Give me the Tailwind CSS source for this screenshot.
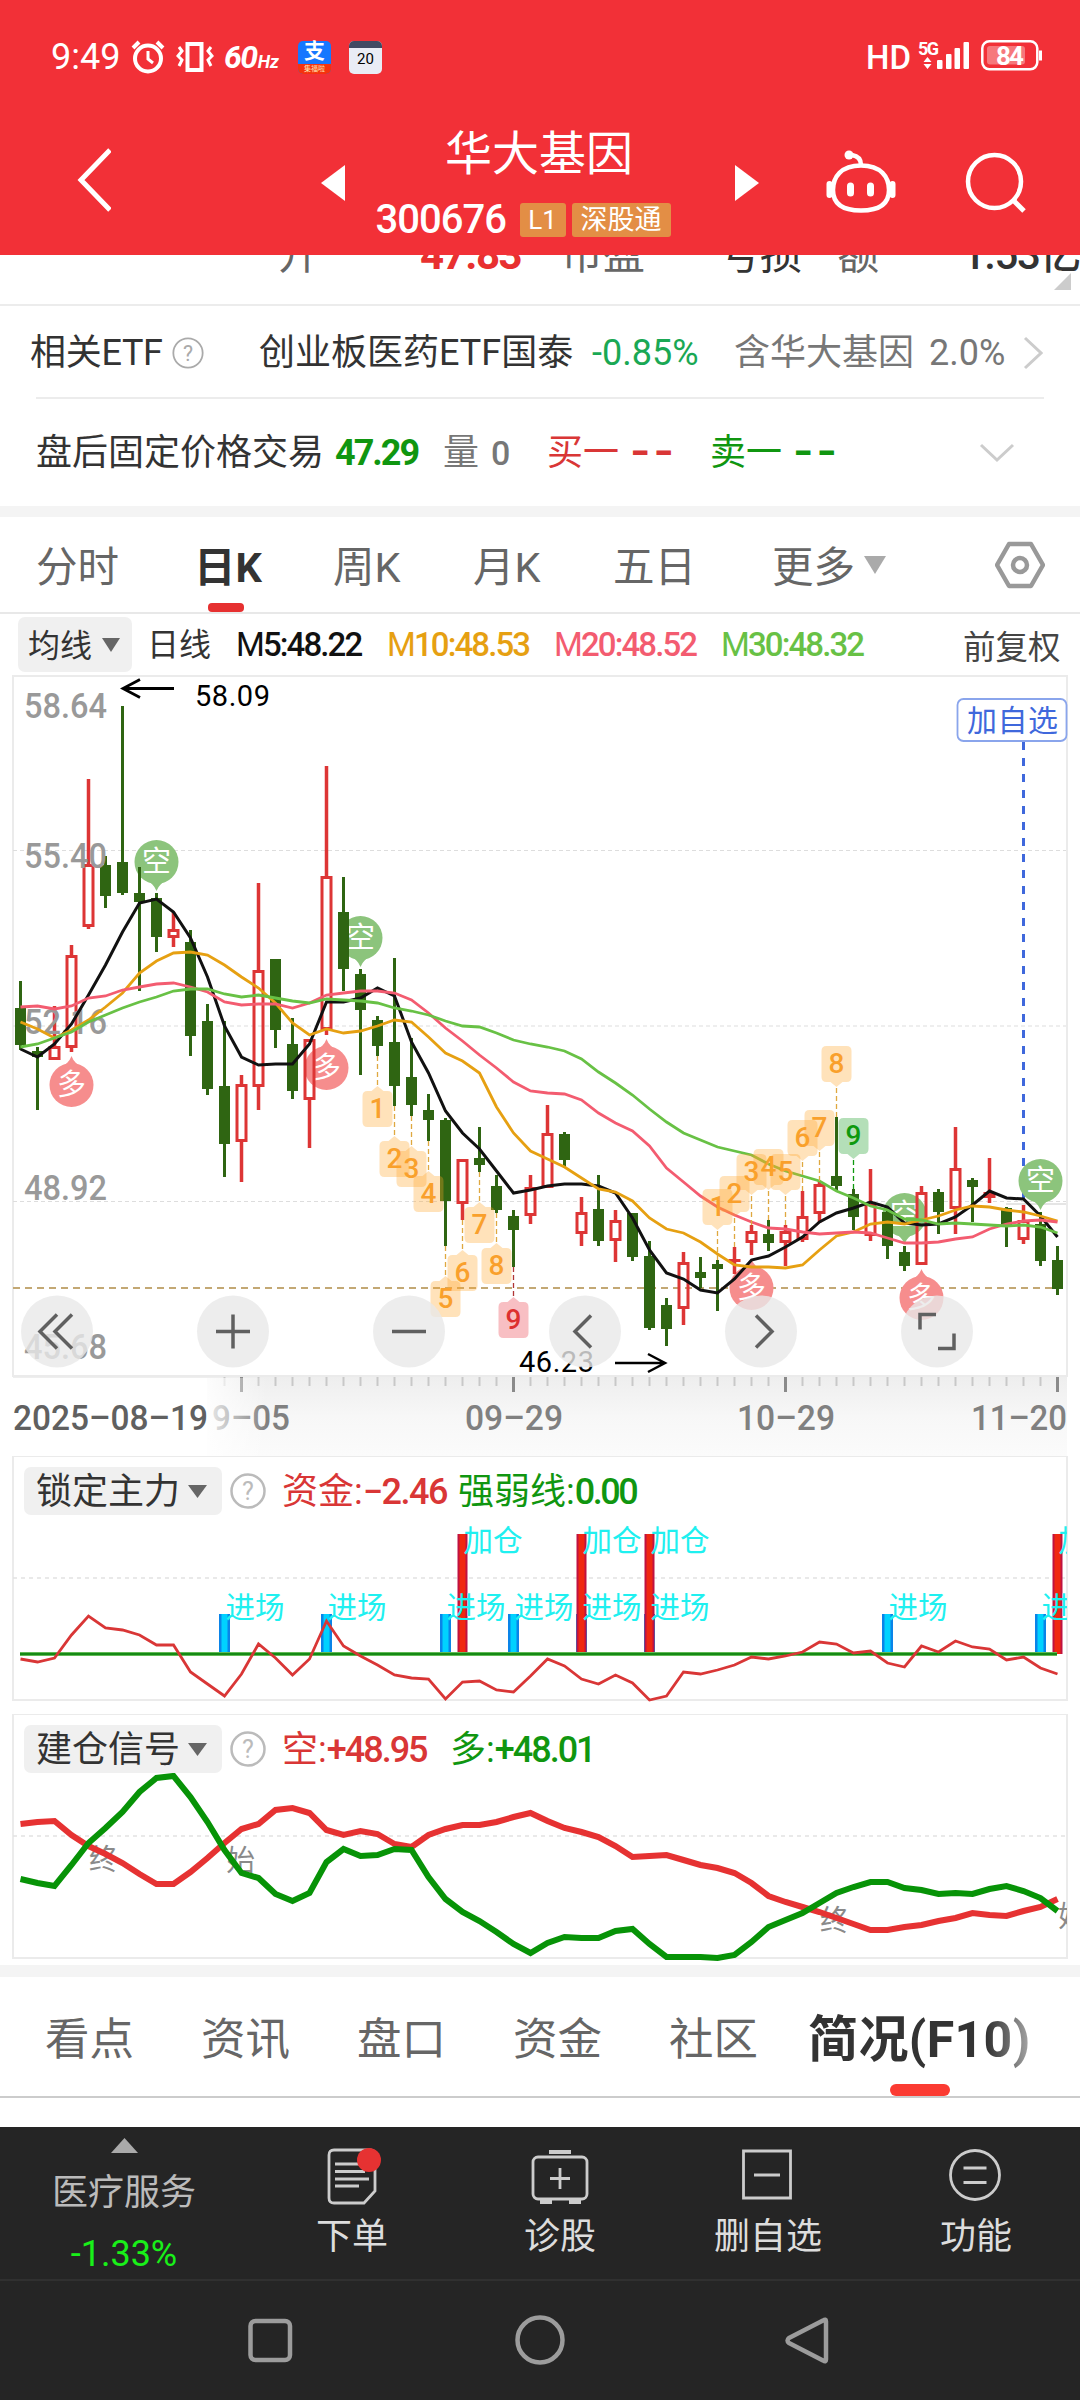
<!DOCTYPE html>
<html lang="zh-CN">
<head>
    <meta charset="UTF-8">
    <meta name="viewport" content="width=device-width, initial-scale=1.0">
    <title>华大基因 300676</title>
    <script src="https://cdn.jsdelivr.net/npm/@tailwindcss/browser@4"></script>
</head>
<body class="bg-white">
<div class="w-[1080px] h-[2400px] overflow-hidden flex flex-col font-[Roboto,'Noto_Sans_CJK_SC',sans-serif] text-[36px] leading-none text-[#333] whitespace-nowrap">

    <!-- Header -->
    <header class="h-[255px] shrink-0 bg-[#f23037] text-white flex flex-col">
        <div class="h-[114px] shrink-0 flex items-center pl-[51px] pr-[38px]">
            <span class="w-[80px]">9:49</span>
            <svg class="w-[34px] h-[34px]" viewBox="0 0 34 34" fill="none" stroke="#fff" stroke-width="4">
                <circle cx="17" cy="18.500" r="13"/><path d="M17 11v8l5 4" stroke-width="3"/><path d="M2 8l6-6M32 8l-6-6"/>
            </svg>
            <svg class="w-[38px] h-[34px] ml-[11px]" viewBox="0 0 38 34" fill="none" stroke="#fff" stroke-width="4">
                <path d="M11.500 4h14v26h-14z"/><path d="M3 7l3 4-4 5 4 4-3 6M35 7l-3 4 4 5-4 4 3 6" stroke-width="3"/>
            </svg>
            <span class="ml-[10px] w-[74px] flex items-baseline font-bold italic"><span class="text-[32px] tracking-[-1.500px]">60</span><span class="text-[18px] ml-[1px]">Hz</span></span>
            <span class="w-[33px] h-[33px] rounded-[5px] bg-[#1677ff] flex flex-col items-center">
                <span class="text-[21px] h-[23px] font-bold">支</span>
                <span class="w-full h-[10px] rounded-b-[5px] bg-[#f5320f] text-center text-[7px] leading-[10px] text-[#ffe2b0]">集福啦</span>
            </span>
            <span class="ml-[18px] w-[33px] h-[33px] rounded-[5px] overflow-hidden bg-[#e9ecf5] flex flex-col items-center">
                <span class="w-full h-[7px] bg-[#414a63]"></span>
                <span class="mt-[4px] text-[15px] text-black">20</span>
            </span>
            <span class="ml-auto w-[52px] text-[33px] font-medium">HD</span>
            <svg class="w-[52px] h-[30px] -mt-[2px] overflow-visible" viewBox="0 0 52 30" fill="#fff">
                <text x="0" y="14" font-size="18" font-weight="700" textLength="21">5G</text>
                <path d="M9.500 16l4 5h-8zM9.500 28l4-5h-8z"/>
                <rect x="19" y="19" width="5.500" height="9" rx="1"/><rect x="28" y="13" width="5.500" height="15" rx="1"/>
                <rect x="36.500" y="7" width="5.500" height="21" rx="1"/><rect x="45.500" y="1" width="5.500" height="27" rx="1"/>
            </svg>
            <svg class="w-[61px] h-[31px] ml-[11px] -mt-[4px]" viewBox="0 0 61 31">
                <rect x="1.300" y="1.300" width="55" height="28" rx="7" fill="none" stroke="#fff" stroke-width="2.500"/>
                <rect x="6" y="6" width="38" height="18.500" rx="3" fill="#fff" fill-opacity=".35"/>
                <path d="M58 10.500h3v10h-3z" fill="#fff"/>
                <text x="15" y="25" font-size="26" font-weight="700" fill="#fff" textLength="28">84</text>
            </svg>
        </div>
        <div class="flex-1 flex">
            <svg class="w-[34px] h-[64px] ml-[77px] mt-[34px]" viewBox="0 0 34 64" fill="none" stroke="#fff" stroke-width="5"><path d="M33 2L4 32l29 30"/></svg>
            <svg class="w-[24px] h-[36px] ml-[210px] mt-[51px]" viewBox="0 0 24 36" fill="#fff"><path d="M24 0v36L0 18z"/></svg>
            <div class="w-[390px] flex flex-col items-center">
                <h1 class="mt-[16px] text-[47px] h-[47px] -ml-[2px]">华大基因</h1>
                <div class="w-[296px] mt-[25px] h-[36px] flex items-center -ml-[33px]">
                    <span class="w-[144px] text-[40px] font-medium tracking-[-1px]">300676</span>
                    <span class="w-[46px] h-[34px] bg-[#e38e45] rounded-[3px] text-[26px] flex items-center justify-center">L1</span>
                    <span class="ml-[6px] w-[99px] shrink-0 h-[34px] bg-[#e38e45] rounded-[3px] text-[27px] flex items-center justify-center">深股通</span>
                </div>
            </div>
            <svg class="w-[24px] h-[36px] mt-[51px]" viewBox="0 0 24 36" fill="#fff"><path d="M0 0v36l24-18z"/></svg>
            <svg class="w-[70px] h-[64px] ml-[67px] mt-[36px]" viewBox="0 0 70 64" fill="none" stroke="#fff" stroke-width="4.500">
                <path d="M35 15.500C15 15.500 7 27 7 40S15 60.500 35 60.500S63 53 63 40S55 15.500 35 15.500z"/>
                <path d="M35 15c0-6-3-9-9-10"/><circle cx="23" cy="5" r="4.500" fill="#fff" stroke="none"/>
                <path d="M3.500 34v11M66.500 34v11" stroke-width="6" stroke-linecap="round"/>
                <path d="M24.500 36v7M44.500 36v7" stroke-width="7" stroke-linecap="round"/>
            </svg>
            <svg class="w-[62px] h-[62px] ml-[69px] mt-[38px]" viewBox="0 0 62 62" fill="none" stroke="#fff" stroke-width="4.500"><circle cx="29.500" cy="29.500" r="26.500"/><path d="M48 48l11 11" stroke-width="5"/></svg>
        </div>
    </header>

    <!-- Quote row, scrolled under the header -->
    <div class="h-[51px] shrink-0 overflow-hidden border-b-2 border-[#ececec] flex text-[42px] text-[#666] pl-[278px] relative">
        <div class="flex -mt-[22px] h-[44px] items-center">
            <span class="w-[142px]">开</span>
            <span class="w-[141px] font-bold text-[#e83030] tracking-[-1.500px]">47.83</span>
            <span class="w-[157px]">市盈</span>
            <span class="w-[119px] text-[#333]">亏损</span>
            <span class="w-[125px]">额</span>
            <span class="text-[#333] font-medium tracking-[-1.500px]">1.53亿</span>
        </div>
        <svg class="absolute left-[1054px] top-[18px] w-[17px] h-[17px]" viewBox="0 0 17 17"><path d="M17 0v17H0z" fill="#ccc"/></svg>
    </div>

    <div class="h-[91px] pt-[2px] shrink-0 ml-[30px] mr-[36px] flex items-center">
        <span class="w-[142px] tracking-[-0.300px]">相关ETF</span>
        <svg class="w-[32px] h-[32px]" viewBox="0 0 36 36"><circle cx="18" cy="18" r="16.500" fill="none" stroke="#aaa" stroke-width="2"/><text x="18" y="26.500" text-anchor="middle" font-size="24" fill="#aaa">?</text></svg>
        <span class="ml-[55px] w-[333px]">创业板医药ETF国泰</span>
        <span class="w-[142px] text-[#1aa854]">-0.85%</span>
        <span class="w-[195px] text-[#777]">含华大基因</span>
        <span class="w-[94px] text-[#777]">2.0%</span>
        <svg class="w-[20px] h-[34px] shrink-0" viewBox="0 0 20 34" fill="none" stroke="#ccc" stroke-width="3"><path d="M2 2l16 15L2 32"/></svg>
    </div>
    <div class="h-[109px] shrink-0 mx-[36px] border-t-2 border-[#ececec] flex items-center">
        <span class="w-[299px]">盘后固定价格交易</span>
        <span class="w-[108px] font-bold text-[#109610] tracking-[-2px]">47.29</span>
        <span class="w-[48px] text-[#777]">量</span>
        <span class="w-[56px] text-[34px] text-[#777] font-medium">0</span>
        <span class="w-[83px] text-[#d93636]">买一</span>
        <span class="w-[80px] text-[#d93636] font-[Inter] text-[44px] font-semibold tracking-[3px] -mt-[5px]">--</span>
        <span class="w-[83px] text-[#109610]">卖一</span>
        <span class="w-[186px] text-[#109610] font-[Inter] text-[44px] font-semibold tracking-[3px] -mt-[5px]">--</span>
        <svg class="w-[36px] h-[20px] shrink-0" viewBox="0 0 36 20" fill="none" stroke="#ccc" stroke-width="3"><path d="M2 2l16 15L34 2"/></svg>
    </div>
    <div class="h-[11px] shrink-0 bg-[#f4f4f4]"></div>

    <!-- Period tabs -->
    <nav class="h-[97px] shrink-0 border-b-2 border-[#e8e8e8] pl-[36px] flex items-center text-[41.500px] text-[#666]">
        <span class="w-[158px] pt-[6px]">分时</span>
        <span class="w-[139px] h-full flex items-center font-bold text-[#333] relative pt-[6px]">日K<i class="absolute left-[14px] bottom-0 w-[36px] h-[9px] rounded-[4px] bg-[#e63030]"></i></span>
        <span class="w-[140px] pt-[6px]">周K</span>
        <span class="w-[140px] pt-[6px]">月K</span>
        <span class="w-[159px] pt-[6px]">五日</span>
        <span class="w-[92px] pt-[6px]">更多</span>
        <svg class="w-[22px] h-[18px]" viewBox="0 0 22 18"><path d="M0 0h22L11 18z" fill="#aaa"/></svg>
        <svg class="w-[50px] h-[48px] ml-[109px]" viewBox="0 0 50 48" fill="none" stroke="#999" stroke-width="4.500" stroke-linejoin="round"><path d="M14 3h22l12 21-12 21H14L2 24z"/><circle cx="25" cy="24" r="7"/></svg>
    </nav>

    <!-- MA legend -->
    <div class="h-[61px] shrink-0 pl-[18px] flex items-center text-[33px]">
        <span class="w-[114px] h-[55px] rounded-[7px] bg-[#f0f0f0] flex items-center pl-[10px] pt-[2px] text-[32px]">均线<svg class="w-[18px] h-[14px] ml-[10px] -mt-[2px]" viewBox="0 0 18 14"><path d="M0 0h18L9 14z" fill="#666"/></svg></span>
        <span class="ml-[15px] w-[89px] text-[32px]">日线</span>
        <span class="w-[151px] font-medium text-[#111] tracking-[-1.900px]"><span class="font-normal">M</span>5:48.22</span>
        <span class="w-[167px] font-medium text-[#e6a012] tracking-[-1.900px]"><span class="font-normal">M</span>10:48.53</span>
        <span class="w-[167px] font-medium text-[#f35c70] tracking-[-1.900px]"><span class="font-normal">M</span>20:48.52</span>
        <span class="w-[242px] font-medium text-[#68c145] tracking-[-1.900px]"><span class="font-normal">M</span>30:48.32</span>
        <span class="text-[32.500px] text-[#444] mt-[8px]">前复权</span>
    </div>

    <!-- Candlestick chart with its date axis -->
    <svg id="kline" class="block w-[1080px] h-[781px] shrink-0" viewBox="0 675 1080 781"></svg>

    <!-- Indicator panels -->
    <section class="h-[258px] shrink-0 relative">
        <svg id="fund" class="absolute inset-0 w-[1080px] h-[258px]" viewBox="0 1456 1080 258"></svg>
        <div class="relative pt-[11px] pl-[24px] flex items-center">
            <span class="w-[198px] h-[48px] rounded-[7px] bg-[#f0f0f0] flex items-center pl-[12px] pt-[2px]">锁定主力<svg class="w-[19px] h-[13px] ml-[8px] -mt-[2px]" viewBox="0 0 18 14" preserveAspectRatio="none"><path d="M0 0h18L9 14z" fill="#666"/></svg></span>
            <svg class="w-[36px] h-[36px] ml-[8px]" viewBox="0 0 36 36"><circle cx="18" cy="18" r="16.500" fill="none" stroke="#bbb" stroke-width="2.500"/><text x="18" y="26.500" text-anchor="middle" font-size="25" fill="#bbb">?</text></svg>
            <span class="ml-[16px] w-[176px] text-[#d93636] flex items-center pt-[2px]">资金:<span class="font-medium tracking-[-1.500px]">−2.46</span></span>
            <span class="text-[#109610] flex items-center pt-[2px]">强弱线:<span class="font-medium tracking-[-2.500px]">0.00</span></span>
        </div>
    </section>
    <section class="h-[251px] shrink-0 relative">
        <svg id="signal" class="absolute inset-0 w-[1080px] h-[251px]" viewBox="0 1714 1080 251"></svg>
        <div class="relative pt-[11px] pl-[24px] flex items-center">
            <span class="w-[198px] h-[48px] rounded-[7px] bg-[#f0f0f0] flex items-center pl-[12px] pt-[2px]">建仓信号<svg class="w-[19px] h-[13px] ml-[8px] -mt-[2px]" viewBox="0 0 18 14" preserveAspectRatio="none"><path d="M0 0h18L9 14z" fill="#666"/></svg></span>
            <svg class="w-[36px] h-[36px] ml-[8px]" viewBox="0 0 36 36"><circle cx="18" cy="18" r="16.500" fill="none" stroke="#bbb" stroke-width="2.500"/><text x="18" y="26.500" text-anchor="middle" font-size="25" fill="#bbb">?</text></svg>
            <span class="ml-[16px] w-[168px] text-[#d93636] flex items-center pt-[2px]">空:<span class="font-medium tracking-[-2px]">+48.95</span></span>
            <span class="text-[#109610] flex items-center pt-[2px]">多:<span class="font-medium tracking-[-2px]">+48.01</span></span>
        </div>
    </section>
    <div class="h-[12px] shrink-0 bg-[#f4f4f4]"></div>

    <!-- Content tabs -->
    <nav class="h-[121px] shrink-0 border-b-2 border-[#ccc] pl-[45px] flex items-center text-[44.500px] text-[#666]">
        <span class="w-[156px] pt-[7px]">看点</span>
        <span class="w-[156px] pt-[7px]">资讯</span>
        <span class="w-[156px] pt-[7px]">盘口</span>
        <span class="w-[156px] pt-[7px]">资金</span>
        <span class="w-[139px] pt-[7px]">社区</span>
        <span class="h-full flex items-center relative text-[50px] font-bold"><span class="bg-linear-to-r from-[#333] from-80% to-[#aaa] bg-clip-text text-transparent pt-[12px] pb-[6px] tracking-[0.400px]">简况(F10)</span><i class="absolute left-[82px] bottom-0 w-[60px] h-[12px] rounded-[6px] bg-[#fb3b32]"></i></span>
    </nav>
    <div class="h-[29px] shrink-0"></div>

    <!-- Bottom toolbar -->
    <footer class="h-[154px] shrink-0 bg-[#252525] text-[#ddd] border-b-2 border-[#303030] flex">
        <div class="w-[248px] flex flex-col items-center text-[#bbb]">
            <svg class="mt-[11px] w-[27px] h-[15px]" viewBox="0 0 27 15"><path d="M13.500 0L27 15H0z" fill="#aaa"/></svg>
            <span class="mt-[22px]">医疗服务</span>
            <span class="mt-[25px] text-[#19f019]">-1.33%</span>
        </div>
        <div class="w-[208px] flex flex-col items-center">
            <svg class="mt-[20px] ml-[5px] w-[58px] h-[58px]" viewBox="0 0 58 58" fill="none" stroke="#ccc" stroke-width="2.800">
                <path d="M8 3h36q5 0 5 5v36L38 56H8q-5 0-5-5V8q0-5 5-5z"/><path d="M9 17h30M9 24.500h30M9 32h34M9 39h24" stroke-width="3"/>
                <circle cx="43" cy="13" r="12" fill="#e63232" stroke="none"/>
            </svg>
            <span class="mt-[14px]">下单</span>
        </div>
        <div class="w-[208px] flex flex-col items-center">
            <svg class="mt-[20px] w-[58px] h-[58px]" viewBox="0 0 58 58" fill="none" stroke="#ccc" stroke-width="2.800">
                <rect x="2" y="10" width="54" height="42" rx="5"/><path d="M18 5h22M9 55h12M38 55h12" stroke-width="4"/><path d="M29 21v21M19 31.500h20"/>
            </svg>
            <span class="mt-[14px]">诊股</span>
        </div>
        <div class="w-[208px] flex flex-col items-center">
            <svg class="mt-[20px] -ml-[2px] w-[58px] h-[58px]" viewBox="0 0 58 58" fill="none" stroke="#ccc" stroke-width="2.800"><path d="M5.500 4h47v47h-47zM16 28h26"/></svg>
            <span class="mt-[14px]">删自选</span>
        </div>
        <div class="w-[208px] flex flex-col items-center">
            <svg class="mt-[20px] -ml-[2px] w-[58px] h-[58px]" viewBox="0 0 58 58" fill="none" stroke="#ccc" stroke-width="2.800"><circle cx="29" cy="28" r="24.500"/><path d="M17.500 21h23M17.500 35.500h23"/></svg>
            <span class="mt-[14px]">功能</span>
        </div>
    </footer>
    <div class="flex-1 bg-[#252525] flex items-center justify-center gap-[218px]">
        <svg class="w-[50px] h-[50px]" viewBox="0 0 50 50" fill="none" stroke="#9c9c9c" stroke-width="4.500"><rect x="5.500" y="5" width="39.500" height="39" rx="5"/></svg>
        <svg class="w-[54px] h-[54px]" viewBox="0 0 54 54" fill="none" stroke="#9c9c9c" stroke-width="4.500"><circle cx="27" cy="26" r="22.500"/></svg>
        <svg class="w-[50px] h-[50px]" viewBox="0 0 50 50" fill="none" stroke="#9c9c9c" stroke-width="4.500" stroke-linejoin="round"><path d="M41 5.500v38q0 3-3 1L4 27q-3-2.500 0-5L38 4.500q3-2 3 1z"/></svg>
    </div>
</div>

<script>
    // One trading day per column
    const X = i => 20.5 + 17 * i;

    // [colour, high, body top, body bottom, low]
    const candles = [
        ['g',981,1008,1045,1050],['g',1047,1051,1057,1110],['r',1006,1046,1060,1060],['r',945,955,1048,1052],
        ['r',779,864,927,929],['g',856,865,896,908],['g',706,862,893,895],['g',867,893,902,991],
        ['g',893,898,937,952],['r',912,929,938,947],['g',930,942,1036,1056],['g',1004,1021,1089,1095],
        ['g',1021,1086,1144,1177],['r',1075,1084,1142,1182],['r',883,970,1087,1110],['g',959,959,1030,1048],
        ['g',1018,1044,1091,1099],['r',1039,1039,1100,1148],['r',766,876,1030,1035],['g',877,912,969,991],
        ['g',969,974,1010,1075],['g',1016,1020,1046,1056],['g',958,1042,1086,1106],['g',1038,1077,1105,1116],
        ['g',1094,1110,1120,1141],['g',1118,1120,1201,1246],['r',1159,1159,1204,1220],['g',1127,1158,1165,1172],
        ['g',1175,1186,1210,1213],['g',1210,1216,1230,1267],['r',1175,1187,1216,1224],['r',1105,1133,1188,1188],
        ['g',1132,1134,1160,1168],['r',1197,1212,1234,1246],['g',1175,1209,1241,1246],['r',1210,1220,1241,1262],
        ['g',1213,1213,1257,1261],['g',1241,1256,1328,1330],['g',1298,1305,1329,1346],['r',1252,1262,1309,1325],
        ['g',1257,1272,1278,1288],['g',1260,1264,1269,1311],['r',1247,1259,1262,1274],['r',1225,1231,1243,1255],
        ['g',1220,1234,1243,1251],['r',1225,1231,1243,1266],['r',1191,1216,1240,1242],['r',1181,1184,1214,1223],
        ['g',1117,1176,1186,1190],['g',1189,1194,1217,1230],['r',1169,1203,1236,1241],['g',1207,1212,1246,1259],
        ['g',1246,1252,1266,1271],['r',1186,1192,1265,1265],['g',1189,1192,1212,1234],['r',1127,1168,1209,1234],
        ['g',1178,1180,1187,1222],['r',1158,1192,1198,1203],['g',1207,1208,1226,1247],['r',1205,1220,1240,1244],
        ['g',1212,1224,1261,1266],['g',1246,1260,1289,1295]
    ];

    const ma5 = [1049,1057,1044,1024,995,965,932,903,899,912,938,977,1026,1057,1065,1064,1064,1044,1002,1002,998,988,996,1042,1073,1111,1133,1149,1171,1193,1190,1186,1184,1184,1186,1193,1218,1250,1273,1279,1290,1293,1279,1260,1256,1247,1237,1222,1213,1208,1202,1207,1223,1225,1224,1217,1205,1191,1198,1199,1216,1237];
    const ma10 = [1022,1029,1038,1030,1020,1007,993,973,961,953,952,955,965,977,988,1003,1023,1035,1029,1033,1031,1026,1020,1022,1037,1053,1061,1073,1107,1133,1151,1159,1167,1178,1189,1192,1201,1218,1229,1233,1242,1254,1265,1267,1267,1268,1265,1250,1236,1232,1224,1222,1224,1220,1216,1210,1206,1207,1210,1212,1216,1221];
    const ma20 = [1007,1006,1009,1006,998,996,990,987,984,983,987,992,1002,1005,1004,1004,1008,1003,995,993,991,991,993,1000,1013,1028,1041,1055,1068,1082,1091,1093,1094,1100,1113,1123,1131,1146,1168,1182,1196,1207,1215,1222,1228,1229,1232,1234,1233,1232,1233,1238,1243,1243,1242,1239,1237,1229,1224,1221,1220,1222];
    const ma30 = [1047,1044,1038,1032,1022,1015,1008,1002,997,991,989,989,994,997,995,998,1001,1003,999,1000,1001,1003,1008,1011,1015,1021,1026,1027,1033,1040,1044,1047,1051,1059,1072,1083,1095,1109,1122,1133,1140,1147,1151,1155,1164,1171,1176,1181,1191,1198,1206,1210,1219,1220,1224,1223,1224,1225,1226,1225,1227,1233];

    const line = (data, color, width) =>
        `<polyline points="${data.map((y, i) => X(i) + ',' + y).join(' ')}" fill="none" stroke="${color}" stroke-width="${width}"/>`;
    const hline = (x1, x2, y, color, width, dash) =>
        `<path d="M${x1} ${y}H${x2}" stroke="${color}" stroke-width="${width}" stroke-dasharray="${dash || 'none'}"/>`;
    const frame = (y, h) => `<rect x="13" y="${y}" width="1054" height="${h}" fill="none" stroke="#ebebeb" stroke-width="2"/>`;

    function candle([c, high, top, bottom, low], i) {
        const x = X(i);
        if (c === 'g') {
            return `<path d="M${x} ${high}V${low}" stroke="#2f6512" stroke-width="3"/><rect x="${x - 5.5}" y="${top}" width="11" height="${bottom - top}" fill="#2f6512"/>`;
        }
        const h = bottom - top;
        const body = h < 7
            ? `<rect x="${x - 6}" y="${top}" width="12" height="${h}" fill="#dd3535"/>`
            : `<rect x="${x - 4.5}" y="${top + 1.5}" width="9" height="${h - 3}" fill="none" stroke="#dd3535" stroke-width="3"/>`;
        return `<path d="M${x} ${high}V${top}M${x} ${bottom}V${low}" stroke="#dd3535" stroke-width="3.5"/>` + body;
    }

    // Round long/short pins
    function pin(i, word) {
        const x = X(i), short = word === '空';
        const cy = short ? candles[i][1] - 31 : candles[i][4] + 33;
        const d = short ? 1 : -1;
        return `<g fill="${short ? '#8cc47c' : '#f68d8d'}"><circle cx="${x}" cy="${cy}" r="22"/><path d="M${x - 11} ${cy + 18 * d}Q${x - 3} ${cy + 21 * d} ${x} ${cy + 29 * d}Q${x + 3} ${cy + 21 * d} ${x + 11} ${cy + 18 * d}z"/></g>
            <text x="${x}" y="${cy + 10}" font-size="29" fill="#fff" text-anchor="middle">${word}</text>`;
    }

    // Numbered tags hanging above or below a candle
    function tag(i, n, above, bg = '#ffa629', bgOpacity = .32, ink = '#f9a02c', dash = '#dfa840') {
        const x = X(i), d = above ? -1 : 1;
        const from = above ? candles[i][1] : candles[i][4];
        const tip = from + 30 * d, near = tip + 5 * d, far = tip + 41 * d;
        const y = Math.min(near, far);
        return `<path d="M${x} ${from}V${tip}" stroke="${dash}" stroke-width="1.3" stroke-dasharray="5 3"/>
            <path d="M${x - 10} ${y}${above ? '' : `L${x - 6} ${y}L${x} ${tip}L${x + 6} ${y}`}H${x + 10}q5 0 5 5v26q0 5 -5 5${above ? `H${x + 6}L${x} ${tip}L${x - 6} ${near}` : ''}H${x - 10}q-5 0 -5 -5v-26q0 -5 5 -5z" fill="${bg}" fill-opacity="${bgOpacity}"/>
            <text x="${x}" y="${y + 27}" font-size="28" font-weight="500" fill="${ink}" text-anchor="middle">${n}</text>`;
    }

    function axisLabel(y, text) {
        return `<text x="24" y="${y}" font-size="35" font-family="Roboto" font-weight="500" fill="#999" textLength="83" lengthAdjust="spacingAndGlyphs">${text}</text>`;
    }

    function roundButton(x, path) {
        return `<circle cx="${x}" cy="1331.500" r="36" fill="#e8e8e8" fill-opacity=".8"/><path d="${path}" transform="translate(${x} 1331.500)" fill="none" stroke="#606060" stroke-width="3.500"/>`;
    }

    let k = `<defs>
        <linearGradient id="axisShade" x1="0" x2="0" y1="0" y2="1"><stop offset="0" stop-color="#eee"/><stop offset=".5" stop-color="#f7f7f7"/><stop offset="1" stop-color="#fbfbfb"/></linearGradient>
        <linearGradient id="axisFade" x1="0" x2="1" y1="0" y2="0"><stop offset="0" stop-color="#fff" stop-opacity=".85"/><stop offset=".35" stop-color="#fff" stop-opacity=".55"/><stop offset="1" stop-color="#fff" stop-opacity="0"/></linearGradient>
    </defs>`;
    k += '<rect x="13" y="1377" width="1054" height="79" fill="url(#axisShade)"/>';
    k += frame(676, 700);
    k += hline(13, 1066, 850.5, '#ddd', 1.2, '4 3') + hline(13, 1066, 1026, '#ddd', 1.2, '4 3') + hline(13, 1066, 1201.5, '#ddd', 1.2, '4 3');
    k += hline(13, 1060, 1288, '#c3a874', 1.9, '7 5') + hline(1006, 1066, 1204, '#ddd', 1.5);
    k += '<path d="M1023.500 742V1205" stroke="#3f68dc" stroke-width="3" stroke-dasharray="8 8"/>';
    k += pin(8, '空') + pin(20, '空') + pin(52, '空') + pin(60, '空');
    k += pin(3, '多') + pin(18, '多') + pin(43, '多') + pin(53, '多');
    k += candles.map(candle).join('');
    k += axisLabel(718, '58.64') + axisLabel(868, '55.40') + axisLabel(1034, '52.16') + axisLabel(1200, '48.92') + axisLabel(1359, '45.68');
    k += line(ma5, '#111', 3) + line(ma10, '#e6a012', 2.8) + line(ma20, '#f35c70', 2.8) + line(ma30, '#68c145', 2.8);

    for (let n = 1; n <= 8; n++) k += tag(20 + n, n, false);
    k += tag(29, 9, false, '#ee6068', .4, '#dd3030', '#b03535');
    for (let n = 1; n <= 8; n++) k += tag(40 + n, n, true);
    k += tag(49, 9, true, '#2fa53a', .36, '#0e990e', '#0e990e');

    k += `<path d="M174 688.500H124M140 679.500L123 688.500L140 697.500" fill="none" stroke="#000" stroke-width="2.800"/>
        <text x="195" y="706" font-size="29" fill="#000" textLength="75">58.09</text>
        <path d="M615 1363H665M648 1354L665 1363L648 1372" fill="none" stroke="#000" stroke-width="2.500"/>
        <text x="519" y="1372" font-size="29" fill="#000" textLength="75">46.23</text>
        <rect x="957.500" y="699" width="109" height="42" rx="6" fill="#fff" stroke="#8aa5ec" stroke-width="1.800"/>
        <text x="967" y="731" font-size="30" fill="#3f68dc" textLength="91">加自选</text>`;

    k += roundButton(57, 'M0 -17L-17 0L0 17M15 -17L-2 0L15 17');
    k += roundButton(233, 'M-17 0H17M0 -17V17');
    k += roundButton(409, 'M-17 0H17');
    k += roundButton(585, 'M6 -16L-10 0L6 16');
    k += roundButton(761, 'M-5 -16L11 0L-5 16');
    k += roundButton(937, 'M-17 -2V-17H-1M17 2V17H1');

    for (let i = 12; i < 62; i++) {
        const major = [13, 29, 45, 61].includes(i);
        k += `<path d="M${X(i)} 1377V${major ? 1392 : 1386}" stroke="${major ? '#8a8a8a' : '#c8c8c8'}" stroke-width="${major ? 3 : 2}"/>`;
    }
    const date = (x, w, text, color) => `<text x="${x}" y="1430" font-size="35" font-family="Roboto" font-weight="500" fill="${color}" textLength="${w}" lengthAdjust="spacingAndGlyphs">${text}</text>`;
    // The first date label runs under the left edge, so its month starts with the 9
    k += date(212, 78, '9–05', '#808080');
    k += date(465, 98, '09–29', '#808080') + date(737, 98, '10–29', '#808080') + date(971, 96, '11–20', '#808080');
    k += '<rect x="2" y="1378" width="205" height="78" fill="#fff"/><rect x="207" y="1378" width="60" height="78" fill="url(#axisFade)"/>';
    k += date(13, 195, '2025–08–19', '#606060');
    document.getElementById('kline').innerHTML = k;

    // Main-force fund indicator
    const fund = [1659,1662,1658,1635,1616,1628,1630,1635,1645,1645,1672,1684,1696,1674,1644,1658,1675,1659,1621,1646,1656,1665,1675,1678,1679,1699,1682,1681,1690,1692,1676,1659,1666,1679,1684,1675,1683,1700,1696,1672,1674,1670,1665,1657,1659,1656,1652,1642,1644,1653,1651,1663,1667,1646,1652,1641,1647,1649,1660,1657,1668,1674];
    let f = '<clipPath id="box"><rect x="13" y="1456" width="1054" height="510"/></clipPath>';
    f += frame(1456, 244) + hline(13, 1066, 1578, '#e2e2e2', 1.5, '4 4');
    [12, 18, 25, 29, 33, 37, 51, 60].forEach(i => {
        f += `<rect x="${X(i) - 5.5}" y="1614" width="11" height="39" fill="#0a84e8"/><rect x="${X(i) - 3}" y="1614" width="6" height="39" fill="#00d2ff"/>`;
    });
    [26, 33, 37, 61].forEach(i => {
        f += `<rect x="${X(i) - 5}" y="1534" width="10" height="120" fill="#c01240"/><rect x="${X(i) - 3}" y="1534" width="6" height="120" fill="#f02810"/>`;
    });
    f += '<g font-size="29.500" fill="#1ff0f0" clip-path="url(#box)">';
    [12, 18, 25, 29, 33, 37, 51, 60].forEach(i => { f += `<text x="${X(i) + 1}" y="1618">进场</text>`; });
    [26, 33, 37, 61].forEach(i => { f += `<text x="${X(i) + 1}" y="1551">加仓</text>`; });
    f += '</g>' + hline(20, 1057, 1654, '#7cc96c', 4) + hline(20, 1057, 1654, '#158a15', 2.4) + line(fund, '#d93636', 2.8);
    document.getElementById('fund').innerHTML = f;

    // Position-building signal
    const shortLine = [1824,1822,1821,1835,1846,1854,1863,1874,1884,1884,1872,1858,1843,1829,1824,1810,1808,1813,1830,1835,1831,1834,1844,1847,1835,1829,1825,1825,1822,1817,1813,1821,1828,1832,1837,1846,1857,1856,1855,1860,1865,1868,1873,1883,1896,1902,1907,1912,1918,1924,1930,1930,1927,1925,1921,1918,1913,1915,1916,1911,1907,1899];
    const longLine = [1879,1883,1886,1865,1843,1828,1812,1792,1778,1776,1797,1822,1850,1873,1878,1894,1901,1893,1862,1849,1856,1855,1849,1850,1877,1899,1912,1921,1932,1944,1953,1943,1937,1938,1938,1931,1929,1944,1957,1957,1957,1958,1955,1942,1927,1920,1913,1903,1893,1887,1882,1882,1888,1890,1894,1893,1894,1889,1886,1891,1898,1911];
    let s = frame(1714, 244) + hline(13, 1066, 1836, '#e2e2e2', 1.5, '4 4');
    s += '<clipPath id="box2"><rect x="13" y="1714" width="1054" height="246"/></clipPath><g font-size="29" fill="#8a8a8a" clip-path="url(#box2)">';
    s += '<text x="89" y="1870">终</text><text x="226" y="1871">始</text><text x="820" y="1931">终</text><text x="1058" y="1927">始</text></g>';
    s += line(shortLine, '#e63232', 6) + line(longLine, '#079307', 6);
    document.getElementById('signal').innerHTML = s;
</script>
</body>
</html>
